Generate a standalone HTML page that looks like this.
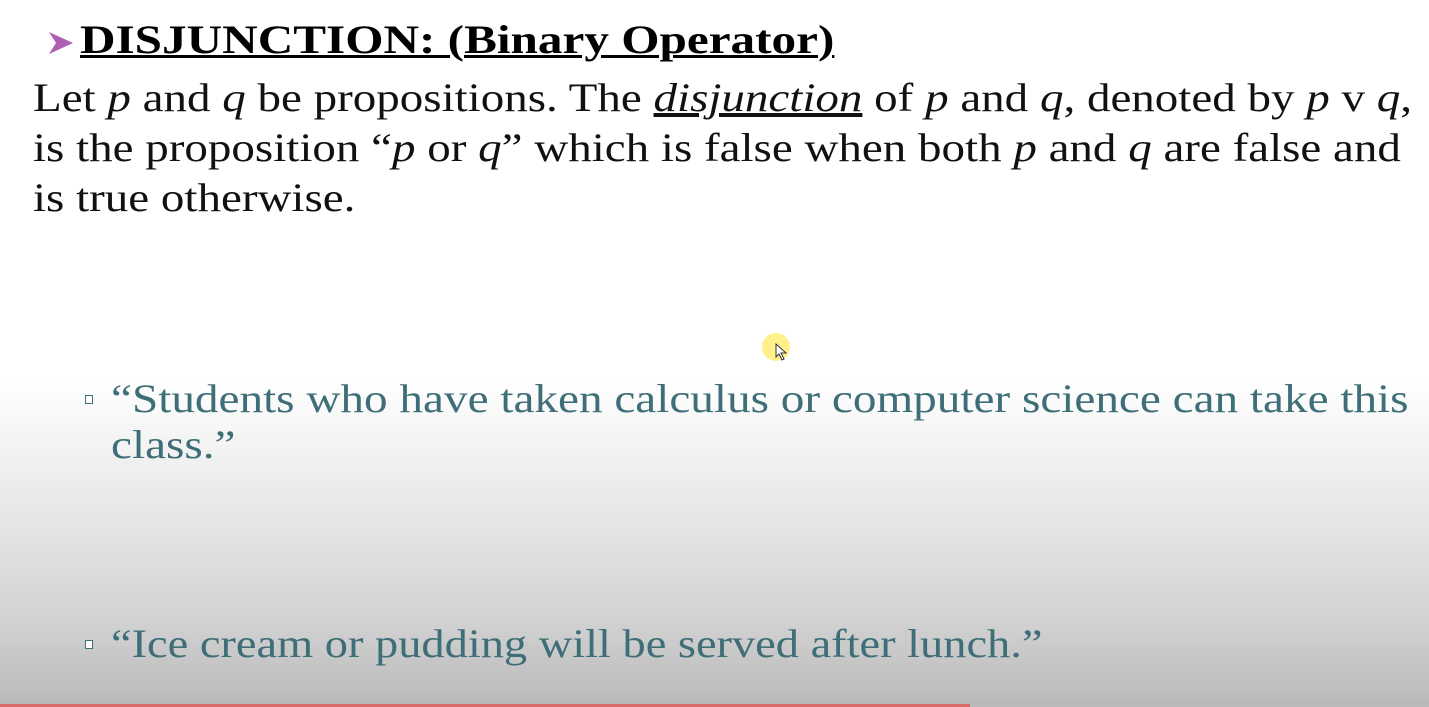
<!DOCTYPE html>
<html><head><style>
html,body{margin:0;padding:0;}
body{width:1429px;height:707px;overflow:hidden;position:relative;font-family:"Liberation Serif",serif;
background:linear-gradient(to bottom,#fff 0,#fff 380px,#e6e6e6 520px,#d2d2d2 620px,#b9b9b9 707px);}
.t{position:absolute;white-space:nowrap;transform-origin:0 0;}
.h{left:80px;top:16px;font-size:40px;font-weight:bold;text-decoration:underline;text-decoration-thickness:3px;color:#000;transform:scaleX(1.23)}
.arr{position:absolute;left:47px;top:30px;}
.p{left:33px;font-size:40px;color:#111;line-height:50px;transform:scaleX(1.175)}
.b{font-size:40px;color:#3e6e77;line-height:46px;transform:scaleX(1.17)}
.sq{position:absolute;width:6px;height:7px;border:1px solid #3e6e77;background:#fff}
.bar{position:absolute;left:0;bottom:0;width:970px;height:3px;background:#d86a6a}
.cur{position:absolute;left:762px;top:333px;width:28px;height:28px;border-radius:50%;background:rgba(255,235,100,0.75)}
</style></head><body>
<svg class="arr" width="28" height="26" viewBox="0 0 28 26"><path d="M2 2 L26 13 L2 24 L9 13 Z" fill="#b15fb4"/></svg>
<div class="t h">DISJUNCTION: (Binary Operator)</div>
<div class="t p" style="top:73px">Let <i>p</i> and <i>q</i> be propositions. The <i><u>disjunction</u></i> of <i>p</i> and <i>q</i>, denoted by <i>p</i> v <i>q</i>,</div>
<div class="t p" style="top:123px">is the proposition “<i>p</i> or <i>q</i>” which is false when both <i>p</i> and <i>q</i> are false and</div>
<div class="t p" style="top:173px">is true otherwise.</div>
<div class="cur"></div>
<svg style="position:absolute;left:775px;top:343px" width="14" height="18" viewBox="0 0 14 18"><path d="M1 1 L1 14 L4 11 L7 17 L9 16 L6 10 L11 10 Z" fill="#fff" stroke="#333" stroke-width="1"/></svg>
<div class="sq" style="left:85px;top:395px"></div>
<div class="t b" style="left:111px;top:376px;transform:scaleX(1.18)">“Students who have taken calculus or computer science can take this</div>
<div class="t b" style="left:111px;top:422px;transform:scaleX(1.18)">class.”</div>
<div class="sq" style="left:85px;top:640px"></div>
<div class="t b" style="left:111px;top:621px;transform:scaleX(1.16)">“Ice cream or pudding will be served after lunch.”</div>
<div class="bar"></div>
</body></html>
